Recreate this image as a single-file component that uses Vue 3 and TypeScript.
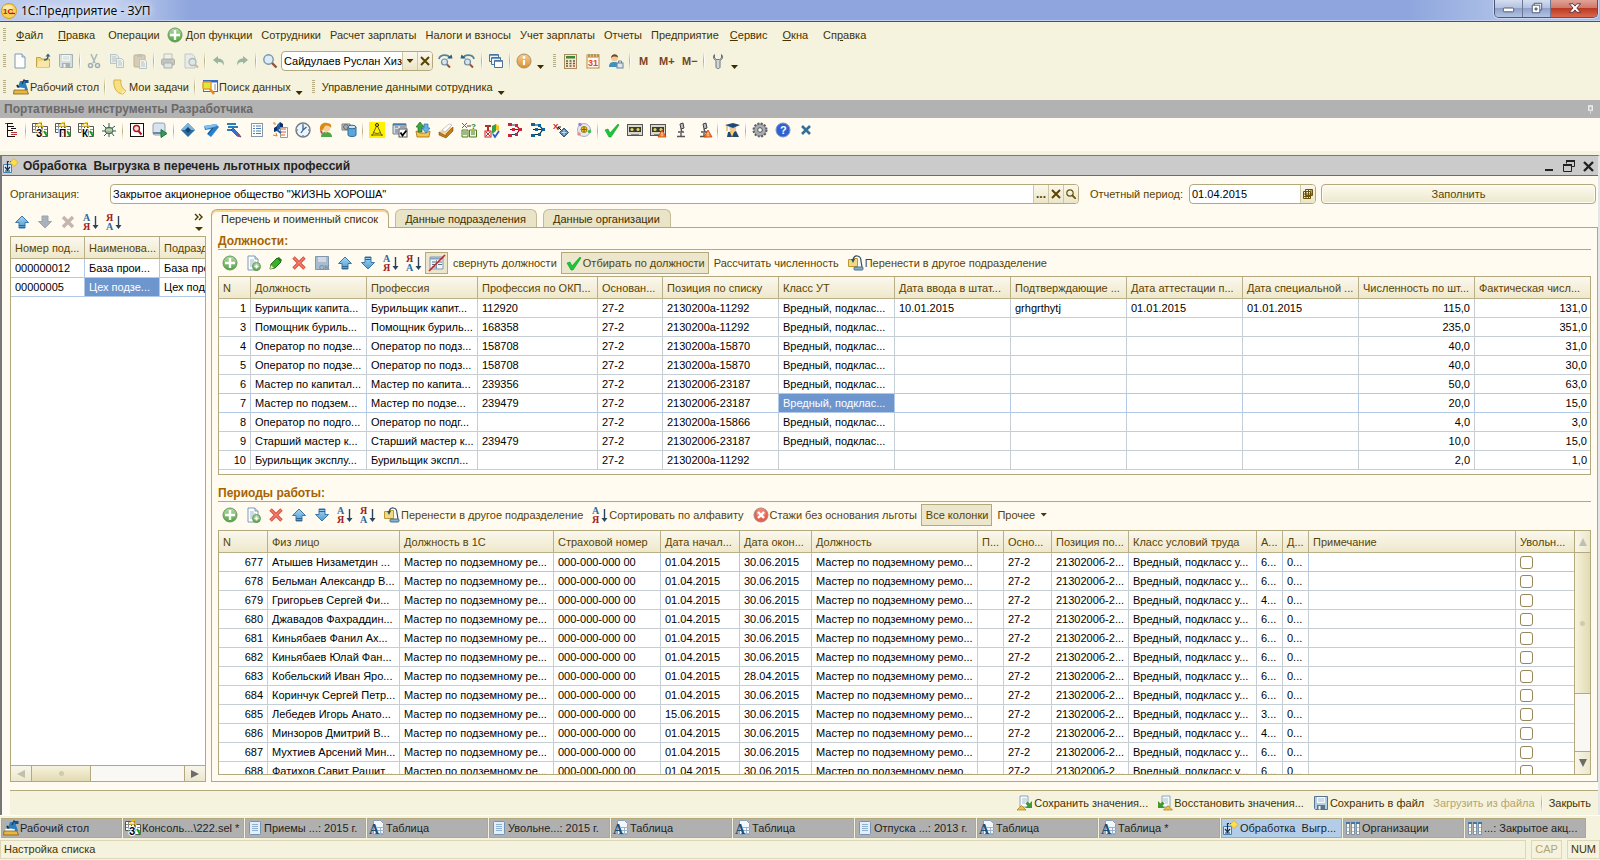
<script setup lang="ts">
import { ref } from 'vue'

interface Tool {
  kind?: 'sep' | 'grip' | 'drop'
  icon?: string
  text?: string
  name?: string
  on?: boolean
  off?: boolean
  arrow?: boolean
}
interface Column { title: string; width: number; num?: boolean }

const page = '<path d="M3 1h7l3 3v11H3z" fill="#fff" stroke="#7d9ab8"/><path d="M10 1v3h3" fill="#dbe8f4" stroke="#7d9ab8"/>'
const lines = '<path d="M5 5h4M5 7h6M5 9h6M5 11h6" stroke="#9ab4cd"/>'
const doc = '<rect x="2.500" y="1.500" width="11" height="13" rx="1" fill="#e3eef8" stroke="#7395b5"/><path d="M5 4.500h6M5 6.500h6M5 8.500h6M5 10.500h6" stroke="#8fb0d0"/>'
const plus = (x: number, y: number, r: number) =>
  `<circle cx="${x}" cy="${y}" r="${r}" fill="url(#gGreen)" stroke="#679a5b"/><path d="M${x - r + 2} ${y}h${2 * r - 4}M${x} ${y - r + 2}v${2 * r - 4}" stroke="#fff" stroke-width="${r > 5 ? 2.4 : 1.6}"/>`
const letter = (s: string, x: number, y: number, c: string, size = 8) =>
  `<text x="${x}" y="${y}" font-family="Liberation Serif, serif" font-weight="bold" font-size="${size}" fill="${c}">${s}</text>`
const sortIcon = (a: string, ca: string, b: string, cb: string) =>
  letter(a, 0, 7, ca, 10) + letter(b, 0, 16, cb, 10) + '<path d="M12.500 2v11" stroke="#28445e" stroke-width="1.400"/><path d="M9.500 11h6l-3 4z" fill="#28445e"/>'
const grids = (s: string) =>
  '<path d="M.5 1.500h9v9h-9zM6.500 4.500h9v10h-9z" fill="#fff" stroke="#555"/><path d="M1 4.500h8M1 7.500h8M3.500 2v9M10.500 5v9M12 7.500h3M12 10.500h3" stroke="#8a8a8a"/><path d="M4 3l6-3M7 0l4 5M5 4h7" stroke="#efc600"/><path d="M12 9l3 5" stroke="#0ba31c" stroke-width="2"/>' +
  `<text x="4" y="15" font-family="Liberation Sans, sans-serif" font-weight="bold" font-size="10" fill="#000" stroke="#fff" stroke-width="2" paint-order="stroke">${s}</text>`
const warn = '<path d="M12 8l4 7H8z" fill="#f58330" stroke="#c8420e" stroke-width=".8"/><path d="M12 10.500v2M12 13.300v1" stroke="#fff"/>'
const scope = '<path d="M7 2l3-1 1 5-3 1z" fill="#b7bcc0" stroke="#444"/><path d="M8 7l1 3M5 10h6M8 11v3M4 14.500h8" stroke="#555" stroke-width="1.400" fill="none"/>'
const tape = '<rect x=".5" y="2.500" width="15" height="11" fill="#d8d8cd" stroke="#555"/><rect x="2" y="5" width="12" height="5" fill="#3b3b2c"/><circle cx="5" cy="7.500" r="1.600" fill="#ded66a"/><circle cx="11" cy="7.500" r="1.600" fill="#ded66a"/><path d="M4 12.500h8" stroke="#888"/>'
const tree = (c: string, d: string) =>
  `<path d="M3 3h6l4 4.500-4 5H3M3 7.500h9" fill="none" stroke="${c}" stroke-width="1.200"/><path d="M1 1h4v3H1zM1 12h4v3H1zM5 6h3v3H5zM11 6h4v3h-4zM8 2h3v3H8zM8 11h3v3H8z" fill="${d}"/>`
const exportIcon = (flip: boolean) =>
  `<g${flip ? ' transform="translate(16 0) scale(-1 1)"' : ''}><path d="M3 1h8v11H3z" fill="#f7fbff" stroke="#8fa5b8"/><path d="M5 4h5M5 6h5M5 8h3" stroke="#a9bccd"/><path d="M15 6v7H8l2.500-2.300L8.500 8.500l2-2 2 2z" fill="#3f9a2d"/></g><path d="M${flip ? 11 : 4.500} 10.500l4.500 4.500h-9z" fill="#eabf45" stroke="#a97f14" stroke-width=".7"/>`
const upArrow = '<path d="M8 2l6.500 6.500H11V14H5V8.500H1.500z" fill="url(#gBlue)" stroke="#3c78a8"/><path d="M5 11.500h6M5 13.500h6" stroke="#2f6794"/>'
const downArrow = '<path d="M8 14L1.500 7.500H5V2h6v5.500h3.500z" fill="url(#gBlue)" stroke="#3c78a8"/><path d="M5 2.500h6M5 4.500h6" stroke="#2f6794"/>'

const icons: Record<string, string> = {
  one: '<circle cx="8" cy="8" r="7.500" fill="#f6d25a" stroke="#d99a1c"/><ellipse cx="7" cy="4.500" rx="5" ry="2.500" fill="#fff" opacity=".5"/><text x="2" y="11" font-family="Liberation Sans, sans-serif" font-weight="bold" font-size="8" fill="#c4161c">1С</text><path d="M8 10.500h6" stroke="#c4161c" stroke-width="1.200"/>',
  plus: plus(8, 8, 7),
  copyadd: page + lines + plus(11.5, 11.5, 4),
  new: page,
  open: '<path d="M1.500 4.500h4l1 1.500h8v8h-13z" fill="#f2d67b" stroke="#c4a046"/><path d="M2 14l1.500-6h11L14 14z" fill="#f8e7a6"/><path d="M9 7c3 0 4-1 4-4" stroke="#34627f" fill="none" stroke-width="1.400"/><path d="M10.500 3.500L13 .5l2.500 3z" fill="#34627f"/>',
  save: '<path d="M1.500 1.500h13v13h-12l-1-1z" fill="#b5cde2" stroke="#56738f"/><rect x="4" y="2" width="8" height="6" fill="#f5f9fc"/><path d="M5 4h6M5 6h6" stroke="#a9bfd3"/><rect x="4" y="10" width="8" height="4.500" fill="#5a748b"/><rect x="5.500" y="11" width="2" height="3.500" fill="#f1f5f8"/>',
  saveok: '<path d="M1.500 1.500h13v13h-13z" fill="#a9bccf" stroke="#8297ad"/><rect x="4" y="2" width="8" height="5" fill="#d1dae3"/><text x="5" y="15" font-family="Liberation Sans, sans-serif" font-weight="bold" font-size="7" fill="#7890a8">OK</text>',
  cut: '<path d="M5 1l4 9M11 1L7 10" stroke="#5f7f9c" stroke-width="1.500"/><circle cx="4.500" cy="12.500" r="2" fill="none" stroke="#4d6c8a" stroke-width="1.500"/><circle cx="11.500" cy="12.500" r="2" fill="none" stroke="#4d6c8a" stroke-width="1.500"/>',
  copy: '<path d="M1.500 1.500h6l2 2v7h-8z" fill="#dbe6f0" stroke="#7c9ab5"/><path d="M3 4h4M3 6h4M3 8h4" stroke="#7c9ab5"/><path d="M7.500 5.500h5l2 2v7h-7z" fill="#eaf1f8" stroke="#7c9ab5"/><path d="M9 8h3M9 10h4M9 12h4" stroke="#7c9ab5"/>',
  paste: '<rect x="2" y="2" width="11" height="12" rx="1" fill="#b8a98a" stroke="#85765a"/><rect x="5" y="1" width="5" height="3" fill="#8b8f95"/><path d="M7.500 6.500h5l2 2v7h-7z" fill="#eaf1f8" stroke="#7c9ab5"/><path d="M9 9h3M9 11h4M9 13h4" stroke="#7c9ab5"/>',
  print: '<path d="M4 1h8v6H4z" fill="#eaf0f6" stroke="#8593a1"/><rect x="1.500" y="6" width="13" height="6" rx="1.500" fill="#8d99a6" stroke="#65717d"/><path d="M4 10h8v5H4z" fill="#c9d8e6" stroke="#65717d"/><circle cx="12.500" cy="8" r="1" fill="#e69d68"/>',
  preview: '<path d="M2 1h7l3 3v11H2z" fill="#dce6ef" stroke="#8ba1b5"/><circle cx="9.500" cy="9" r="3.500" fill="#c9def0" stroke="#657e94" stroke-width="1.300"/><path d="M12 11.500l3 3" stroke="#b9735c" stroke-width="2"/>',
  undo: '<path d="M2 7l5-4v2.500c4 0 6 2 6 7-1.500-3-3-3.500-6-3.500V11z" fill="#3f7a60"/>',
  redo: '<path d="M14 7L9 3v2.500c-4 0-6 2-6 7 1.500-3 3-3.500 6-3.500V11z" fill="#3f7a60"/>',
  find: '<circle cx="6.500" cy="6.500" r="4.700" fill="#dcebf8" stroke="#7593ae" stroke-width="1.400"/><path d="M10 10l4.500 4.500" stroke="#94523b" stroke-width="2.400"/>',
  findnext: '<path d="M2 6c1-5 9-5 11-1" fill="none" stroke="#4f83a5" stroke-width="1.800"/><path d="M10 5.500h5.500l-1-4z" fill="#2d5f82"/><circle cx="7.500" cy="9" r="3" fill="#d5e5f2" stroke="#728ca3" stroke-width="1.200"/><path d="M10 11.500l3 3" stroke="#94523b" stroke-width="2"/>',
  findprev: '<path d="M14 6c-1-5-9-5-11-1" fill="none" stroke="#4f83a5" stroke-width="1.800"/><path d="M6 5.500H.5l1-4z" fill="#2d5f82"/><circle cx="7.500" cy="9" r="3" fill="#d5e5f2" stroke="#728ca3" stroke-width="1.200"/><path d="M10 11.500l3 3" stroke="#94523b" stroke-width="2"/>',
  windows: '<path d="M1.500 1.500h9v7h-9z" fill="#e9f2fb" stroke="#47749c"/><path d="M3.500 4.500h9v7h-9z" fill="#e9f2fb" stroke="#47749c"/><path d="M6.500 7.500h8v7h-8z" fill="#fff" stroke="#47749c"/><path d="M2 2.500h8M4 5.500h8M7 8.500h7" stroke="#6f9bc4"/>',
  info: '<circle cx="8" cy="8" r="7" fill="url(#gOrange)" stroke="#a8906a"/><path d="M8 7v5" stroke="#fff" stroke-width="2.200"/><circle cx="8" cy="4.500" r="1.400" fill="#fff"/>',
  calc: '<rect x="2.500" y="1.500" width="12" height="14" fill="#f3e7ce" stroke="#a98c60"/><rect x="4" y="3" width="9" height="2.500" fill="#398a39"/><path d="M4 8h2M7.500 8h2M11 8h2M4 10.500h2M7.500 10.500h2M11 10.500h2M4 13h2M7.500 13h2" stroke="#6b583c" stroke-width="1.400"/><path d="M11 13h2" stroke="#d0442a" stroke-width="1.400"/>',
  cal: '<rect x="2" y="2" width="12" height="13" fill="#fffaf0" stroke="#b48a4c"/><path d="M2 2h12v3H2z" fill="#eeb766"/><path d="M4 1v3M7 1v3M10 1v3M13 1v3" stroke="#8a6a3c"/><text x="3" y="13" font-family="Liberation Sans, sans-serif" font-size="9" font-weight="bold" fill="#e2472d">31</text>',
  user: '<path d="M1 14c0-4 2-5 5-5s5 1 5 5z" fill="#3f92bf"/><circle cx="6.500" cy="5" r="3.300" fill="#f2c89a"/><path d="M3 5c0-5 7-5 7-.5-2-1-4-2-7 .5z" fill="#7a4519"/><rect x="9" y="10" width="6" height="5" fill="#dfe6ec" stroke="#68829b"/><path d="M10.500 10V8h3v2" fill="none" stroke="#68829b"/>',
  m: '<text x="3" y="12" font-family="Liberation Sans, sans-serif" font-weight="bold" font-size="11" fill="#7a4522">M</text>',
  mp: '<text x="0" y="12" font-family="Liberation Sans, sans-serif" font-weight="bold" font-size="11" fill="#7a4522">M+</text>',
  mm: '<text x="0" y="12" font-family="Liberation Sans, sans-serif" font-weight="bold" font-size="11" fill="#7a4522">M−</text>',
  wrench: '<path d="M4.500 1.500c-2 2-1 5 1.500 6v6.500c0 2 4 2 4 0V7.500c2.500-1 3.500-4 1.500-6v3.500l-2 1.500h-3l-2-1.500z" fill="#d3d6d8" stroke="#6d7377"/>',
  desk: '<path d="M7 2h5l3 9H4z" fill="#2d7ec0"/><path d="M9 5l2-4 3 2" stroke="#1d3a52" fill="none" stroke-width="1.200"/><rect x="12" y="1" width="3.500" height="3" fill="#1c4f84"/><path d="M4 6l3 5" stroke="#12354f" stroke-width="2"/><ellipse cx="7" cy="10" rx="5" ry="1.500" fill="#fff"/><path d="M1 11h13l1.500 4H.5z" fill="#e9b73e" stroke="#84601b" stroke-width=".8"/>',
  tasks: '<path d="M2 1h7c-1 5 2 9 5 11l-3 3C5 15 1 9 2 1z" fill="#f8df80" stroke="#d4b14a"/><path d="M10 15c-1-2 1-3 4-3z" fill="#fff3bd"/>',
  search: '<rect x="1.500" y="1.500" width="14" height="11" fill="#fff" stroke="#4b6fa8"/><path d="M1 2.500h15" stroke="#2d67d2" stroke-width="2"/><rect x="1" y="3" width="8" height="7" rx="1" fill="#d4ee38" stroke="#eb9b2d" stroke-width="1.500"/><path d="M8 10l4 5" stroke="#e8891f" stroke-width="2.500"/><path d="M12 6h2M12 8h2M12 10h2" stroke="#88a"/>',
  d1: '<path d="M2 1.500h7M4 4.500h6M7 6.500h5M4 8.500h5M4 14.500h7M3.500 2v13" stroke="#111"/><path d="M1 1.500h2M7 10.500h6M7 12.500h6" stroke="#bf3030"/>',
  gz: grids('З'), gp: grids('П'), gk: grids('К'),
  bug: '<path d="M2 3l4 4M14 4l-4 3M1 9h5M10 9h5M3 14l4-4M13 14l-3-4M8 1v5M8 11v4" stroke="#2c5a52"/><ellipse cx="8" cy="8.500" rx="4" ry="3.200" fill="#99b58e" stroke="#3a6458"/><path d="M5 8h6" stroke="#dceccf"/>',
  bfind: '<rect x="1.500" y="1.500" width="13" height="13" fill="#fff" stroke="#111"/><circle cx="7.500" cy="6.500" r="3" fill="#ffdada" stroke="#a61c1c" stroke-width="1.400"/><path d="M9.500 9l3 3.500" stroke="#a61c1c" stroke-width="2"/>',
  run: '<rect x="1" y="1" width="12" height="12" rx="2" fill="#d9e3ef" stroke="#8ea3b8"/><path d="M1 11h9" stroke="#6f87a0" stroke-width="2"/><path d="M9 7.500l6 4-6 4z" fill="#359a57" stroke="#1f7a40"/>',
  dia: '<path d="M8 1l7 7-7 7-7-7z" fill="#2c6ca6"/><path d="M8 1l7 7H1z" fill="#7ab4e0"/><path d="M8 5l3 3-3 3-3-3z" fill="#15456f"/>',
  dart: '<path d="M1 4l12-2 3 3-8 10-4-3 4-5-6 1z" fill="#2c80c7"/><path d="M1 4l12-2 1 2-11 3z" fill="#7fc0ef"/><path d="M5 12l5-6" stroke="#164a7d"/>',
  pen: '<path d="M1 2h9M2 5h10M1 8h8" stroke="#2b7fb8" stroke-width="1.800"/><path d="M7 6l6 6 2 3-4-1-6-6z" fill="#3b6ed0" stroke="#1d418d" stroke-width=".7"/><path d="M12 12l3 3-4-1z" fill="#d6372b"/>',
  list: '<rect x="2.500" y="1.500" width="11" height="13" fill="#fff" stroke="#8297ad"/><path d="M4 4h2M7 4h5M4 6.500h2M7 6.500h5M4 9h2M7 9h5M4 11.500h2M7 11.500h5" stroke="#4a7fb0"/>',
  cubes: '<path d="M5 3l3-3v7L5 9z" fill="#1b5fae"/><path d="M8 0l3 2v6L8 7zM2 6l3-2v5l-3 1z" fill="#0b2f66"/><path d="M8.500 5.500h7v10h-7z" fill="#fff" stroke="#999"/><path d="M9 7h5M9 10h5M9 13h4" stroke="#e05a28"/><path d="M1 1h2v2M1 13l4 1-1-3" stroke="#e07a20" fill="none"/><path d="M5 8l4 3" stroke="#1b5fae" stroke-width="2"/>',
  clock: '<circle cx="8" cy="8" r="7" fill="#eef4fa" stroke="#6f7e8c" stroke-width="1.500"/><path d="M8 3v5l3.500-3M8 8l-2 3" stroke="#2d64a8" fill="none" stroke-width="1.300"/><path d="M8 2v1M8 13v1M2 8h1M13 8h1" stroke="#555"/>',
  boy: '<path d="M3 15c0-4 2-5 5-5s6 1 6 5z" fill="#4fa547"/><path d="M5 3c4-3 8 0 7 5l-4 3-3-3z" fill="#f9cf9a"/><path d="M2 8c-1-6 4-8 7-7 4 0 5 3 4 5-1-2-4-3-6-2l-3 5z" fill="#d98a17"/><path d="M3 12l-1-4 3 2z" fill="#c33"/>',
  cyl: '<path d="M1 2h8v6H1z" fill="#d1d6da" stroke="#777"/><circle cx="5" cy="5" r="2.500" fill="#aaa" stroke="#666"/><path d="M7 5v8c0 2 8 2 8 0V5z" fill="#5fa6d8" stroke="#2f6a99"/><ellipse cx="11" cy="5" rx="4" ry="1.800" fill="#cbe5f6" stroke="#2f6a99"/>',
  compass: '<rect x="0" y="0" width="16" height="16" fill="#fff200"/><path d="M8 3L3 14M8 3l5 11M4 10c3 2 5 2 8 0M2 13h12" stroke="#6b6510" fill="none"/><circle cx="8" cy="3" r="1.500" fill="#fff200" stroke="#222"/>',
  check: '<path d="M1 2h13v10H1z" fill="#d5dde4" stroke="#70808e"/><path d="M1 2.500h13" stroke="#447ba9" stroke-width="2"/><path d="M3 5h3M3 8h3M8 5h5M3 10h3" stroke="#667"/><rect x="7" y="7" width="8" height="8" fill="#fff" stroke="#555"/><path d="M8.500 10.500l2 3 4-5" stroke="#000" fill="none" stroke-width="1.800"/>',
  updown: '<path d="M1 9l1 6h12l1-6-4 2H5z" fill="#f7c44c" stroke="#a56d0c" stroke-width=".8"/><path d="M1 5l4-5 4 5H7v5H3V5z" fill="#3ea53f" stroke="#226a25" stroke-width=".7"/><path d="M7 6h2V2h4v4h2l-4 5z" fill="#60b3e8" stroke="#2470a3" stroke-width=".7"/>',
  box: '<path d="M1 10l8-6 6 2-7 8z" fill="#f4d491"/><path d="M1 10l7 4v-2l7-7v4l-7 7-7-3z" fill="#c47b1c" stroke="#7c490d" stroke-width=".6"/><path d="M4 8l7-6 3 1-7 7z" fill="#fff" stroke="#aaa" stroke-width=".6"/>',
  book: '<path d="M1 8h6v7H1zM8.500 8h7v7h-7z" fill="#eef6dc" stroke="#4e7c22"/><path d="M2 10h4M2 12h4M10 10h4M10 12h4" stroke="#4e7c22"/><path d="M1 1l5 5M6 1L1 6" stroke="#d33"/><text x="10" y="7" font-family="Liberation Sans, sans-serif" font-weight="bold" font-size="8" fill="#187c18">?</text><path d="M6 4h4" stroke="#444"/>',
  test: '<path d="M1 4h6M4 4v6" stroke="#a33" stroke-width="2"/><rect x="1" y="9" width="6" height="6" fill="#fff" stroke="#c22"/><path d="M2 10l4 4M6 10l-4 4" stroke="#c22"/><path d="M8 4l4-2v7l-4 3z" fill="#33a04a"/><path d="M12 2l3 2v5l-3-1z" fill="#f3c41f"/><path d="M9 12l2 3 4-6" fill="none" stroke="#235fd1" stroke-width="1.800"/>',
  treer: tree('#1c3f66', '#c8243c'), treeb: tree('#0e2a42', '#0e6392'),
  xdia: '<text x="0" y="7" font-family="Liberation Sans, sans-serif" font-weight="bold" font-size="8" fill="#e01616">X</text><path d="M5 5l4 4M5 5h3M5 5v3" stroke="#111"/><path d="M11 6l4.500 4.500L11 15l-4.500-4.500z" fill="#5a86ae" stroke="#31597c"/><path d="M11 8v5M8.500 10.500h5" stroke="#c7dcef"/>',
  disc: '<circle cx="8" cy="8" r="6.500" fill="#e5e8ee" stroke="#aab1bc"/><circle cx="8" cy="7.500" r="3" fill="#f0c327" stroke="#a57d0e"/><path d="M8 5v5M5.500 7.500h5" stroke="#7c5c08"/><circle cx="4" cy="2.500" r="1.800" fill="#8a86e0"/><circle cx="13.500" cy="9.500" r="1.800" fill="#4fb35a"/><circle cx="3" cy="12" r="1.800" fill="#e88b94"/>',
  ok: '<path d="M1 8l3-1 2 4 8-9 1 1-8 12H5z" fill="#19c832" stroke="#10992a" stroke-width=".6"/>',
  tape, tapew: tape + warn, scope, scopew: scope + warn,
  grad: '<path d="M3 15l1-5 8-1 3 6z" fill="#24496e"/><path d="M6 10l2 5 2-5z" fill="#f7d35d"/><path d="M5 5h7v3c-1 3-5 3-6 0z" fill="#f1c698"/><path d="M1 3l8-2 7 2-7 3z" fill="#1d4b78"/><path d="M3 4v5" stroke="#d89a28"/>',
  gear: '<circle cx="8" cy="8" r="6.500" fill="#8f9499" stroke="#5d6165" stroke-width="2" stroke-dasharray="2 1.400"/><circle cx="8" cy="8" r="5.300" fill="#a9adb1"/><circle cx="8" cy="8" r="2.300" fill="#fff" stroke="#555"/>',
  help: '<circle cx="8" cy="8" r="7" fill="#2f62d0" stroke="#7b93cf"/><text x="5" y="12" font-family="Liberation Sans, sans-serif" font-weight="bold" font-size="11" fill="#fff">?</text>',
  close: '<path d="M4 4l8 8M12 4l-8 8" stroke="#356f9c" stroke-width="2.600"/>',
  up: upArrow,
  down: downArrow,
  downoff: '<path d="M8 14L1.500 7.500H5V2h6v5.500h3.500z" fill="#a9b2ba" stroke="#9aa5ae"/>',
  del: '<path d="M2.500 2.500l11 11M13.500 2.500l-11 11" stroke="#d9513f" stroke-width="3.400"/><path d="M3 3l10 10M13 3L3 13" stroke="#f0806f" stroke-width="1.400"/>',
  deloff: '<path d="M3 3l10 10M13 3L3 13" stroke="#c6b4ae" stroke-width="3.400"/>',
  az: sortIcon('А', '#2f6a9c', 'Я', '#a02020'),
  za: sortIcon('Я', '#a02020', 'А', '#2f6a9c'),
  pencil: '<path d="M2 14l1-5 6-6 4 4-6 6z" fill="#3cae2c" stroke="#1d7212"/><path d="M2 14l1-4 3 3z" fill="#f5deb0"/><path d="M9 3l2-1 3 3-1 2z" fill="#267d1b"/>',
  nolist: '<path d="M1 2h13v12H1z" fill="#f2f6fa" stroke="#8198ae"/><path d="M1 3.500h13" stroke="#7fa5c8" stroke-width="2"/><path d="M3 7h4M9 7h4M3 9.500h4M9 9.500h4M3 12h4" stroke="#5f7488"/><path d="M7.500 5v9" stroke="#8198ae"/><path d="M0 16L16 0" stroke="#cc1e1e" stroke-width="1.600"/>',
  move: '<path d="M.5 4.500h4l1-1h4v8h-9z" fill="#f3da82" stroke="#b99838"/><path d="M5 5c1-6 8-5 8 1l1 6" fill="none" stroke="#2c4f68" stroke-width="1.200"/><path d="M3 4h4L5 8z" fill="#2c4f68"/><rect x="6" y="12" width="9" height="3" rx="1" fill="#8ab0cc" stroke="#45708f"/>',
  stop: '<circle cx="8" cy="8" r="7" fill="#e8604c" stroke="#9e8a86"/><circle cx="8" cy="6" r="5" fill="#f39b8b" opacity=".6"/><path d="M5 5l6 6M11 5l-6 6" stroke="#fff" stroke-width="2.400"/>',
  proc: '<path d="M.5 6.500h8v8h-8z" fill="#dcebf7" stroke="#4a80ac"/><path d="M4.500 3v8M2 9l2.500 3L7 9M2 13h5" stroke="#17344c" fill="none" stroke-width="1.200"/><path d="M5 3.500h3" stroke="#17344c" stroke-dasharray="1 1"/><path d="M11 .5l4 4-4 4-4-4z" fill="#ffe04a" stroke="#d7a51c" stroke-width=".7"/>',
  expo: exportIcon(false), impo: exportIcon(true),
  doc,
  tbl: '<path d="M4.500.5h7l3 3v11h-10z" fill="#f4f8fc" stroke="#8ba2b8"/><path d="M8 7.500h8M8 10.500h8M8 13.500h8M11.500 7v8" stroke="#9fb2c4"/>' + letter('А', 0, 14, '#1d4f75', 14),
  cat: '<path d="M1.500 2.500h3v12h-3zM6.500 2.500h3v12h-3zM11.500 2.500h3v12h-3z" fill="#fbfaf0" stroke="#7c93a8"/><path d="M1 3h4M6 3h4M11 3h4" stroke="#3e77ad" stroke-width="2"/><path d="M3 7v1M8 7v1M13 7v1M3 11v1M8 11v1M13 11v1" stroke="#e5bd3a" stroke-width="2"/>'
}

const sep: Tool = { kind: 'sep' }
const grip: Tool = { kind: 'grip' }
const drop: Tool = { kind: 'drop' }
const ic = (s: string): Tool[] => s.split(' ').map(n => (n === '|' ? sep : { icon: n, name: n }))
const dim = (s: string): Tool[] => ic(s).map(t => (t.kind ? t : { ...t, off: true }))

const menu: { a?: string; u?: string; b?: string; icon?: string }[] = [
  { u: 'Ф', b: 'айл' }, { u: 'П', b: 'равка' }, { a: 'Операции' }, { a: 'Доп функции', icon: 'plus' }, { a: 'Сотрудники' },
  { a: 'Расчет зарплаты' }, { a: 'Налоги и взносы' }, { a: 'Учет зарплаты' }, { a: 'Отчеты' }, { a: 'Предприятие' },
  { u: 'С', b: 'ервис' }, { u: 'О', b: 'кна' }, { a: 'Сп', u: 'р', b: 'авка' }
]
const stdLeft: Tool[] = [grip, ...ic('new open'), ...dim('save | cut copy paste | print preview | undo redo'), ...ic('| find')]
const stdRight: Tool[] = [...ic('findnext findprev | windows | info'), drop, grip, ...ic('calc cal user | m mp mm | wrench'), drop]
const quick: Tool[] = [
  grip, { icon: 'desk', text: 'Рабочий стол' }, sep, { icon: 'tasks', text: 'Мои задачи' }, sep,
  { icon: 'search', text: 'Поиск данных' }, drop, grip, { text: 'Управление данными сотрудника' }, drop
]
const dev = ic('d1 | gz gp gk bug | bfind run | dia dart pen list cubes clock boy cyl | compass check updown box book test treer treeb xdia disc | ok tape tapew scope scopew | grad | gear help close')
const unitTools = ic('up downoff deloff az za')
const jobTools: Tool[] = [
  ...ic('plus copyadd pencil del saveok up down az za'), { icon: 'nolist', name: 'nolist', on: true },
  { text: 'свернуть должности' }, { icon: 'ok', text: 'Отбирать по должности', on: true },
  { text: 'Рассчитать численность' }, { icon: 'move', text: 'Перенести в другое подразделение' }
]
const periodTools: Tool[] = [
  ...ic('plus copyadd del up down az za'), { icon: 'move', text: 'Перенести в другое подразделение' },
  { icon: 'az', text: 'Сортировать по алфавиту' }, { icon: 'stop', text: 'Стажи без основания льготы' },
  { text: 'Все колонки', on: true }, { text: 'Прочее', arrow: true }
]
const footTools: Tool[] = [
  { icon: 'expo', text: 'Сохранить значения...' }, { icon: 'impo', text: 'Восстановить значения...' },
  { icon: 'save', text: 'Сохранить в файл' }, { text: 'Загрузить из файла', off: true }, sep, { text: 'Закрыть' }
]

const c = (title: string, width: number, num = false): Column => ({ title, width, num })
const unitCols = [c('Номер под...', 74), c('Наименова...', 75), c('Подразд', 45)]
const units = [['000000012', 'База прои...', 'База про'], ['00000005', 'Цех подзе...', 'Цех подз']]

const jobCols = [
  c('N', 32, true), c('Должность', 116), c('Профессия', 111), c('Профессия по ОКП...', 120), c('Основан...', 65),
  c('Позиция по списку', 116), c('Класс УТ', 116), c('Дата ввода в штат...', 116), c('Подтверждающие ...', 116),
  c('Дата аттестации п...', 116), c('Дата специальной ...', 116), c('Численность по шт...', 116, true), c('Фактическая числ...', 116, true)
]
const V = 'Вредный, подклас...'
const job = (n: string, d: string, p: string, o: string, pos: string, k: string, plan: string, fact: string, extra = ['', '', '', '']) =>
  [n, d, p, o, '27-2', pos, k, ...extra, plan, fact]
const jobs = [
  job('1', 'Бурильщик капита...', 'Бурильщик капит...', '112920', '2130200а-11292', V, '115,0', '131,0', ['10.01.2015', 'grhgrthytj', '01.01.2015', '01.01.2015']),
  job('3', 'Помощник буриль...', 'Помощник буриль...', '168358', '2130200а-11292', V, '235,0', '351,0'),
  job('4', 'Оператор по подзе...', 'Оператор по подз...', '158708', '2130200а-15870', V, '40,0', '31,0'),
  job('5', 'Оператор по подзе...', 'Оператор по подз...', '158708', '2130200а-15870', V, '40,0', '30,0'),
  job('6', 'Мастер по капитал...', 'Мастер по капита...', '239356', '2130200б-23187', V, '50,0', '63,0'),
  job('7', 'Мастер по подзем...', 'Мастер по подзе...', '239479', '2130200б-23187', V, '20,0', '15,0'),
  job('8', 'Оператор по подго...', 'Оператор по подг...', '', '2130200а-15866', V, '4,0', '3,0'),
  job('9', 'Старший мастер к...', 'Старший мастер к...', '239479', '2130200б-23187', V, '10,0', '15,0'),
  job('10', 'Бурильщик эксплу...', 'Бурильщик экспл...', '', '2130200а-11292', '', '2,0', '1,0')
]

const periodCols = [
  c('N', 49, true), c('Физ лицо', 132), c('Должность в 1С', 154), c('Страховой номер', 107), c('Дата начал...', 79),
  c('Дата окон...', 72), c('Должность', 166), c('П...', 26), c('Осно...', 48), c('Позиция по...', 77),
  c('Класс условий труда', 128), c('А...', 26), c('Д...', 26), c('Примечание', 207), c('Увольн...', 59)
]
const period = (n: number, who: string, a: string, from = '01.04.2015', to = '30.06.2015') =>
  [String(n), who, 'Мастер по подземному ре...', '000-000-000 00', from, to, 'Мастер по подземному ремо...', '', '27-2',
    '2130200б-2...', 'Вредный, подкласс у...', a, '0...', '']
const periods = [
  period(677, 'Атышев Низаметдин ...', '6...'), period(678, 'Бельман Александр В...', '6...'),
  period(679, 'Григорьев Сергей Фи...', '4...'), period(680, 'Джавадов Фахраддин...', '6...'),
  period(681, 'Киньябаев Фанил Ах...', '6...'), period(682, 'Киньябаев Юлай Фан...', '6...'),
  period(683, 'Кобельский Иван Яро...', '6...', '01.04.2015', '28.04.2015'), period(684, 'Коринчук Сергей Петр...', '6...'),
  period(685, 'Лебедев Игорь Анато...', '3...', '15.06.2015'), period(686, 'Минзоров Дмитрий В...', '4...'),
  period(687, 'Мухтиев Арсений Мин...', '6...'), period(688, 'Фатихов Савит Рашит...', '6...')
]

const tasks = [
  ['desk', 'Рабочий стол'], ['gz', 'Консоль...\\222.sel *'], ['doc', 'Приемы ...: 2015 г.'], ['tbl', 'Таблица'],
  ['doc', 'Увольне...: 2015 г.'], ['tbl', 'Таблица'], ['tbl', 'Таблица'], ['doc', 'Отпуска ...: 2013 г.'], ['tbl', 'Таблица'],
  ['tbl', 'Таблица *'], ['proc', 'Обработка  Выгр...'], ['cat', 'Организации'], ['cat', '...: Закрытое акц...']
]
const tabs = ['Перечень и поименный список', 'Данные подразделения', 'Данные организации']
const tab = ref(0)
const org = ref('Закрытое акционерное общество "ЖИЗНЬ ХОРОША"')
const reportDate = ref('01.04.2015')
const query = ref('Сайдулаев Руслан Хиз')
</script>

<template>
  <div class="app">
    <svg class="defs" width="0" height="0" aria-hidden="true">
      <defs>
        <linearGradient id="gGreen" x2="0" y2="1"><stop stop-color="#b5dba9" /><stop offset="1" stop-color="#4fa13f" /></linearGradient>
        <linearGradient id="gOrange" x2="0" y2="1"><stop stop-color="#f7cf8f" /><stop offset="1" stop-color="#dd8f2b" /></linearGradient>
        <linearGradient id="gBlue" x2="0" y2="1"><stop stop-color="#a7d6f2" /><stop offset="1" stop-color="#4d9bd0" /></linearGradient>
      </defs>
    </svg>

    <header class="title">
      <svg class="ic" viewBox="0 0 16 16" v-html="icons.one" />
      <span class="caption">1С:Предприятие - ЗУП</span>
      <div class="winbtns">
        <button class="wb" aria-label="Свернуть"><svg viewBox="0 0 28 18"><rect x="8.500" y="8.500" width="11" height="4" rx="1" fill="#fff" stroke="#4a5674" /></svg></button>
        <button class="wb mid" aria-label="Восстановить"><svg viewBox="0 0 28 18"><path d="M11.500 3.500h8v7h-8z" fill="#fff" stroke="#4a5674" /><path d="M9.500 5.500h8v8h-8z" fill="#fff" stroke="#4a5674" /><path d="M12.500 8.500h2v2h-2z" fill="#8fa2c9" stroke="#4a5674" /></svg></button>
        <button class="wb red" aria-label="Закрыть"><svg viewBox="0 0 46 18"><path d="M18 4h4l2 2.500L26 4h4l-4 4.500 4 4.500h-4l-2-2.500-2 2.500h-4l4-4.500z" fill="#fff" stroke="#5b3038" /></svg></button>
      </div>
    </header>

    <nav class="bar menu">
      <i class="grip" />
      <button v-for="(m, i) in menu" :key="i" class="mi" :class="{ hot: m.u, pic: m.icon }">
        <svg v-if="m.icon" class="ic" viewBox="0 0 16 16" v-html="icons[m.icon]" />
        <span>{{ m.a }}<u v-if="m.u">{{ m.u }}</u>{{ m.b }}</span>
      </button>
    </nav>

    <div class="bar">
      <template v-for="(t, i) in stdLeft" :key="i">
        <i v-if="t.kind" :class="t.kind" />
        <button v-else class="tb" :class="{ off: t.off }" :aria-label="t.name"><svg class="ic" viewBox="0 0 16 16" v-html="icons[t.icon!]" /></button>
      </template>
      <div class="field combo">
        <input v-model="query" aria-label="Поиск">
        <button aria-label="Список"><i class="tri" /></button>
        <button aria-label="Очистить"><svg class="x" viewBox="0 0 10 10"><path d="M1 1l8 8M9 1L1 9" stroke="#5a4400" stroke-width="2" /></svg></button>
      </div>
      <template v-for="(t, i) in stdRight" :key="i">
        <i v-if="t.kind" :class="t.kind" />
        <button v-else class="tb" :aria-label="t.name"><svg class="ic" viewBox="0 0 16 16" v-html="icons[t.icon!]" /></button>
      </template>
    </div>

    <div class="bar quick">
      <template v-for="(t, i) in quick" :key="i">
        <i v-if="t.kind" :class="t.kind" />
        <button v-else class="tx"><svg v-if="t.icon" class="ic" viewBox="0 0 16 16" v-html="icons[t.icon]" /><span>{{ t.text }}</span></button>
      </template>
    </div>

    <div class="devtitle">
      <span>Портативные инструменты Разработчика</span>
      <svg class="pin" viewBox="0 0 8 10"><path d="M2 1h4v5H2z" fill="none" stroke="#f2f2f2" stroke-width="1.500" /><path d="M4 6v4M2 6h4" stroke="#dedede" /></svg>
    </div>
    <div class="bar devbar">
      <template v-for="(t, i) in dev" :key="i">
        <i v-if="t.kind" :class="t.kind" />
        <button v-else class="tb" :aria-label="t.name"><svg class="ic" viewBox="0 0 16 16" v-html="icons[t.icon!]" /></button>
      </template>
    </div>

    <main class="win">
      <div class="wintitle">
        <svg class="ic" viewBox="0 0 16 16" v-html="icons.proc" />
        <h1>Обработка&nbsp; Выгрузка в перечень льготных профессий</h1>
        <button aria-label="Свернуть окно"><svg viewBox="0 0 12 12"><path d="M2 10h8" stroke="#222" stroke-width="2" /></svg></button>
        <button aria-label="Восстановить окно"><svg viewBox="0 0 12 12"><path d="M3.500 3.500v-3h8v6h-3M.5 4.500h8v7h-8z" fill="none" stroke="#222" /><path d="M3 1h9M0 5h9" stroke="#222" stroke-width="2" /></svg></button>
        <button aria-label="Закрыть окно"><svg viewBox="0 0 12 12"><path d="M1 2l9 9M10 2l-9 9" stroke="#222" stroke-width="2.400" /></svg></button>
      </div>

      <div class="form">
        <label for="org" class="lorg">Организация:</label>
        <div class="field grow">
          <input id="org" v-model="org">
          <button aria-label="Выбрать" class="dots">...</button>
          <button aria-label="Очистить"><svg class="x" viewBox="0 0 10 10"><path d="M1 1l8 8M9 1L1 9" stroke="#5a4400" stroke-width="2" /></svg></button>
          <button aria-label="Открыть"><svg class="x" viewBox="0 0 10 10"><circle cx="4" cy="4" r="3.200" fill="none" stroke="#6a5208" stroke-width="1.200" /><path d="M6 6l4 4" stroke="#6a5208" stroke-width="1.800" /></svg></button>
        </div>
        <label for="date" class="ldate">Отчетный период:</label>
        <div class="field date">
          <input id="date" v-model="reportDate">
          <button aria-label="Календарь"><svg class="x" viewBox="0 0 10 10"><path d="M2.500.5h7v6h-7z" fill="#f5f0d5" stroke="#6a5208" /><path d="M.5 2.500h7v7h-7zM.5 5h9M.5 7.500h7M3 2v7M5.500 0v9M8 0v7" fill="none" stroke="#6a5208" /></svg></button>
        </div>
        <button class="fill">Заполнить</button>
      </div>

      <div class="body">
        <aside class="left">
          <div class="bar ltools">
            <button v-for="t in unitTools" :key="t.icon" class="tb" :aria-label="t.name"><svg class="ic" viewBox="0 0 16 16" v-html="icons[t.icon!]" /></button>
            <button class="more" aria-label="Еще"><svg viewBox="0 0 10 18"><path d="M1 1l3 3-3 3M5 1l3 3-3 3" fill="none" stroke="#4a3800" stroke-width="1.400" /><path d="M1 14h8l-4 4z" fill="#4a3800" /></svg></button>
          </div>
          <div class="box lbox">
            <div class="clip">
              <table>
                <colgroup><col v-for="k in unitCols" :key="k.title" :style="{ width: k.width + 'px' }"></colgroup>
                <thead><tr><th v-for="k in unitCols" :key="k.title">{{ k.title }}</th></tr></thead>
                <tbody>
                  <tr v-for="(r, i) in units" :key="i" class="cur"><td v-for="(v, j) in r" :key="j" :class="{ sel: i === 1 && j === 1 }">{{ v }}</td></tr>
                </tbody>
              </table>
            </div>
            <div class="hs">
              <button class="dis" aria-label="Влево"><svg viewBox="0 0 8 8"><path d="M8 0v8L0 4z" fill="#c3bfae" /></svg></button>
              <div class="thumb"><i /></div>
              <div class="track" />
              <button aria-label="Вправо"><svg viewBox="0 0 8 8"><path d="M0 0v8l8-4z" fill="#6b6b6b" /></svg></button>
            </div>
          </div>
        </aside>

        <section class="right">
          <div class="tabs" role="tablist">
            <button v-for="(t, i) in tabs" :key="t" role="tab" :aria-selected="tab === i" :class="{ act: tab === i }" @click="tab = i">{{ t }}</button>
          </div>
          <div class="panel">
            <h2>Должности:</h2>
            <div class="bar ptools">
              <button v-for="(t, i) in jobTools" :key="i" :class="[t.text ? 'tx' : 'tb', { on: t.on }]" :aria-label="t.name"><svg v-if="t.icon" class="ic" viewBox="0 0 16 16" v-html="icons[t.icon]" /><span v-if="t.text">{{ t.text }}</span></button>
            </div>
            <div class="box jbox">
              <table>
                <colgroup><col v-for="k in jobCols" :key="k.title" :style="{ width: k.width + 'px' }"></colgroup>
                <thead><tr><th v-for="k in jobCols" :key="k.title">{{ k.title }}</th></tr></thead>
                <tbody>
                  <tr v-for="(r, i) in jobs" :key="i" :class="{ cur: i === 5, pre: i === 4 }">
                    <td v-for="(v, j) in r" :key="j" :class="{ num: jobCols[j].num, sel: i === 5 && j === 6 }">{{ v }}</td>
                  </tr>
                </tbody>
              </table>
            </div>

            <h2 class="second">Периоды работы:</h2>
            <div class="bar ptools low">
              <button v-for="(t, i) in periodTools" :key="i" :class="[t.text ? 'tx' : 'tb', { on: t.on }]" :aria-label="t.name"><svg v-if="t.icon" class="ic" viewBox="0 0 16 16" v-html="icons[t.icon]" /><span v-if="t.text">{{ t.text }}</span><i v-if="t.arrow" class="tri" /></button>
            </div>
            <div class="box pbox">
              <div class="clip">
                <table>
                  <colgroup><col v-for="(k, i) in periodCols" :key="i" :style="{ width: k.width + 'px' }"></colgroup>
                  <thead><tr><th v-for="(k, i) in periodCols" :key="i">{{ k.title }}</th></tr></thead>
                  <tbody>
                    <tr v-for="(r, i) in periods" :key="i" :class="{ cur: i === 0 }">
                      <td v-for="(v, j) in r" :key="j" :class="{ num: periodCols[j].num }">{{ v }}</td>
                      <td class="ck"><input type="checkbox" :aria-label="'Увольнение ' + r[0]"></td>
                    </tr>
                  </tbody>
                </table>
              </div>
              <div class="vs">
                <button class="dis" aria-label="Вверх"><svg viewBox="0 0 8 8"><path d="M4 0l4 8H0z" fill="#c3bfae" /></svg></button>
                <div class="thumb"><i /></div>
                <div class="track" />
                <button aria-label="Вниз"><svg viewBox="0 0 8 8"><path d="M0 0h8L4 8z" fill="#6b6b6b" /></svg></button>
              </div>
            </div>
          </div>
        </section>
      </div>

      <div class="bar foot">
        <template v-for="(t, i) in footTools" :key="i">
          <i v-if="t.kind" :class="t.kind" />
          <button v-else class="tx" :disabled="t.off"><svg v-if="t.icon" class="ic" viewBox="0 0 16 16" v-html="icons[t.icon]" /><span>{{ t.text }}</span></button>
        </template>
      </div>
    </main>

    <nav class="tasks">
      <button v-for="(t, i) in tasks" :key="i" :class="{ act: i === 10 }"><svg class="ic" viewBox="0 0 16 16" v-html="icons[t[0]]" /><span>{{ t[1] }}</span></button>
    </nav>
    <footer class="status">
      <span class="msg">Настройка списка</span><span class="cap">CAP</span><span>NUM</span>
    </footer>
  </div>
</template>

<style>
body { margin: 0; overflow: hidden; background: #f5f2dd; }
</style>

<style scoped>
.app { display: flex; flex-direction: column; height: 100vh; font: 11px/16px "Liberation Sans", Arial, sans-serif; color: #463300; background: #f5f2dd; overflow: hidden; }
.app * { box-sizing: border-box; }
.defs { position: absolute; }
button { font: inherit; color: inherit; background: none; border: 0; padding: 0; margin: 0; white-space: pre; }
input { font: inherit; color: #000; margin: 0; }
.ic { width: 16px; height: 16px; flex: none; display: block; overflow: visible; }

.title { display: flex; align-items: center; height: 22px; flex: none; padding: 0 2px 0 1px; border-bottom: 1px solid #47506c; box-shadow: inset 0 -1px #c3d1f0; background: linear-gradient(90deg, #b9c9ec 0, #c6d3f0 110px, #8ea6dd 190px, #8ea6dd 88%, #b4c5ea 95%, #a8bbe6 100%); }
.caption { flex: 1; padding-left: 4px; font: 12px/20px "Open Sans", "Noto Sans", sans-serif; color: #000; text-shadow: 0 0 6px #fff, 0 0 8px #fff; }
.winbtns { display: flex; align-self: flex-start; height: 18px; border: 1px solid #4a5674; border-top: 0; border-radius: 0 0 5px 5px; overflow: hidden; box-shadow: 0 0 0 1px #ccd8f3; }
.wb { width: 28px; height: 17px; background: linear-gradient(#d5def0, #b4c2e0 45%, #8fa2c9 50%, #b3c3e4); border-right: 1px solid #6c7896; }
.wb.red { width: 46px; background: linear-gradient(#e0a398, #d17a6a 45%, #bb3a24 50%, #d9694c); border-right: 0; }
.wb svg { display: block; height: 17px; width: 100%; }

.bar { display: flex; align-items: center; flex: none; height: 26px; }
.mi { display: flex; align-items: center; gap: 3px; padding: 0 4px 0 5px; height: 20px; }
.mi.hot { padding: 0 8px 0 7px; }
.mi.pic { padding-left: 3px; }
.grip { width: 3px; height: 14px; margin: 0 2px 0 3px; flex: none; background: repeating-linear-gradient(#b8ae86 0 1px, transparent 1px 2px); }
.menu .grip { margin-right: 3px; }
.sep { width: 5px; height: 18px; flex: none; background: linear-gradient(transparent, #b8ae86 50%, transparent) 2px 0 / 1px 100% no-repeat, linear-gradient(transparent, #fff 50%, transparent) 3px 0 / 1px 100% no-repeat; }
.drop { width: 7px; height: 4px; flex: none; align-self: flex-end; margin: 0 6px 5px 2px; background: #3d2c00; clip-path: polygon(0 0, 100% 0, 50% 100%); }
.tb { display: flex; align-items: center; justify-content: center; width: 23px; height: 22px; flex: none; }
.tx { display: flex; align-items: center; gap: 1px; height: 22px; padding: 0 3px 0 4px; border: 1px solid transparent; flex: none; }
.quick .tx { padding: 0 2px 0 4px; }
.on { background: #ebe6cc; border: 1px solid #b3a97c; }
.off .ic { opacity: .5; }
.tx:disabled { color: #b5a572; }
.tri { width: 7px; height: 4px; display: inline-block; background: #4a3800; clip-path: polygon(0 0, 100% 0, 50% 100%); }
.tx .tri { margin-left: 4px; }

.field { display: flex; height: 20px; border: 1px solid #b3a97c; border-radius: 4px; background: #fff; overflow: hidden; }
.field input { flex: 1; min-width: 0; border: 0; outline: 0; padding: 0 2px; background: none; }
.field button { width: 15px; flex: none; display: flex; align-items: center; justify-content: center; border-left: 1px solid #cfc79f; background: linear-gradient(#faf8ec, #ebe6c8); }
.field .dots { font-weight: bold; font-size: 12px; color: #5a4400; }
.x { width: 10px; height: 10px; display: block; }
.combo { width: 152px; }
.combo input { padding: 0 0 0 2px; }

.devtitle { display: flex; align-items: center; justify-content: space-between; height: 18px; flex: none; padding: 0 6px 0 4px; background: #b2b2b2; color: #696969; font-size: 12px; font-weight: bold; }
.pin { width: 7px; height: 9px; }
.devbar { height: 33px; align-items: flex-start; padding-top: 1px; background: #fffbf0; }
.devbar .sep { margin-top: 3px; }

.win { flex: 1; min-height: 0; display: flex; flex-direction: column; margin-top: 4px; border: solid #77777a; border-width: 1px 0 0 2px; border-right: 2px solid #e6e6e6; background: #fffbf0; color: #594304; }
.wintitle { display: flex; align-items: center; height: 20px; flex: none; padding: 0 3px 0 1px; background: #cbcbcb; border-bottom: 1px solid #6b6b6b; gap: 8px; }
.wintitle h1 { flex: 1; margin: 0 0 0 -4px; font-size: 12px; line-height: 18px; color: #222; }
.wintitle svg { width: 12px; height: 12px; display: block; }
.wintitle .ic { width: 16px; height: 16px; }

.form { display: flex; align-items: center; flex: none; padding: 8px 2px 0 8px; }
.lorg { width: 100px; }
.grow { flex: 1; }
.ldate { padding: 0 6px 0 11px; }
.date { width: 127px; }
.fill { width: 275px; height: 20px; margin-left: 5px; border: 1px solid #b3a97c; border-radius: 4px; background: linear-gradient(#fcfaf0, #ece8cb); box-shadow: inset 0 0 0 1px #fdfbf2; }

.body { flex: 1; min-height: 0; display: flex; gap: 5px; padding: 5px 0 8px 8px; }
.left { width: 196px; flex: none; display: flex; flex-direction: column; }
.ltools { height: 27px; padding-bottom: 2px; }
.more { margin-left: auto; margin-right: 2px; }
.more svg { width: 10px; height: 18px; display: block; }
.box { border: 1px solid #b3a97c; background: #fff; overflow: hidden; }
.lbox { flex: 1; min-height: 0; display: flex; flex-direction: column; }
.clip { flex: 1; min-width: 0; min-height: 0; overflow: hidden; }
table { width: 100%; table-layout: fixed; border-collapse: separate; border-spacing: 0; color: #000; }
th, td { padding: 0 0 0 4px; overflow: hidden; white-space: nowrap; text-align: left; font-weight: normal; border-right: 1px solid #c5ced5; border-bottom: 1px solid #c5ced5; height: 19px; line-height: 18px; }
th { height: 22px; line-height: 20px; color: #594304; border-color: #b9b08a; background: linear-gradient(#faf8ee, #efe8ca); }
tr > :last-child { border-right: 0; }
td.num { text-align: right; padding: 0 4px 0 0; }
.sel { background: #6d96cf; color: #fff; }
.cur td { border-color: #b1c8e6; }
.pre td { border-bottom-color: #b1c8e6; }
.ck input { appearance: none; display: block; width: 13px; height: 13px; border: 1px solid #948759; border-radius: 3px; background: #fff; }

.hs { display: flex; height: 16px; flex: none; border-top: 1px solid #b3a97c; }
.hs button, .vs button { display: flex; align-items: center; justify-content: center; flex: none; background: linear-gradient(#f8f6ea, #ebe7cd); }
.hs button { width: 20px; }
.hs button svg, .vs button svg { width: 8px; height: 8px; }
.thumb { display: flex; align-items: center; justify-content: center; }
.thumb i { width: 5px; height: 5px; border-radius: 3px; background: #d0cba9; }
.hs .thumb { flex: 59; border: solid #b3a97c; border-width: 0 1px; background: linear-gradient(#f6f3dd, #e2dab2); }
.track { background: #f9f8f5; }
.hs .track { flex: 94; border-right: 1px solid #b3a97c; }

.right { flex: 1; min-width: 0; display: flex; flex-direction: column; }
.tabs { display: flex; gap: 6px; height: 19px; flex: none; position: relative; z-index: 1; margin-bottom: -1px; }
.tabs button { padding: 0 10px 0 9px; height: 18px; color: #3e2e00; border: 1px solid #c4bb92; border-bottom: 0; border-radius: 6px 6px 0 0; background: #e9e3c8; }
.tabs .act { height: 19px; border-color: #b3a97c; background: #fffbf0; box-shadow: inset 0 2px #fbd38c; }
.panel { flex: 1; min-height: 0; display: flex; flex-direction: column; padding: 5px 6px 6px; border: 1px solid #b3a97c; }
h2 { margin: 0; flex: none; height: 17px; font-size: 12px; line-height: 17px; color: #a66300; border-bottom: 1px solid #b3a97c; }
.second { margin-top: 10px; }
.ptools.low { height: 28px; padding-bottom: 3px; }
.jbox { flex: none; padding-bottom: 4px; }
.pbox { flex: 1; min-height: 0; display: flex; }
.vs { width: 16px; flex: none; display: flex; flex-direction: column; border-left: 1px solid #b3a97c; }
.vs button { height: 22px; border-bottom: 1px solid #b3a97c; background: linear-gradient(90deg, #f8f6ea, #ebe7cd); }
.vs button:last-child { border-bottom: 0; }
.vs .thumb { flex: 144; border-bottom: 1px solid #b3a97c; background: linear-gradient(90deg, #f6f3dd, #e2dab2); }
.vs .track { flex: 58; border-bottom: 1px solid #b3a97c; }

.foot { justify-content: flex-end; height: 25px; margin-left: 8px; padding-right: 3px; border-top: 1px solid #b3a97c; background: #f5f2dd; color: #463300; }
.tasks { display: flex; gap: 1px; flex: none; padding: 2px 14px 2px 1px; border-top: 1px solid #fff; }
.tasks button { flex: 1 1 0; min-width: 0; height: 20px; display: flex; align-items: center; gap: 1px; padding: 0 1px; overflow: hidden; border: 1px solid #b3a97c; background: #b0b0b0; color: #1f1f1f; }
.tasks .act { background: #b3cde8; }
.status { display: flex; gap: 5px; flex: none; height: 20px; }
.status span { height: 19px; line-height: 17px; padding: 0 3px; border: 1px solid #dcd7b8; }
.status .msg { flex: 1; }
.cap { color: #b5a572; }
</style>
